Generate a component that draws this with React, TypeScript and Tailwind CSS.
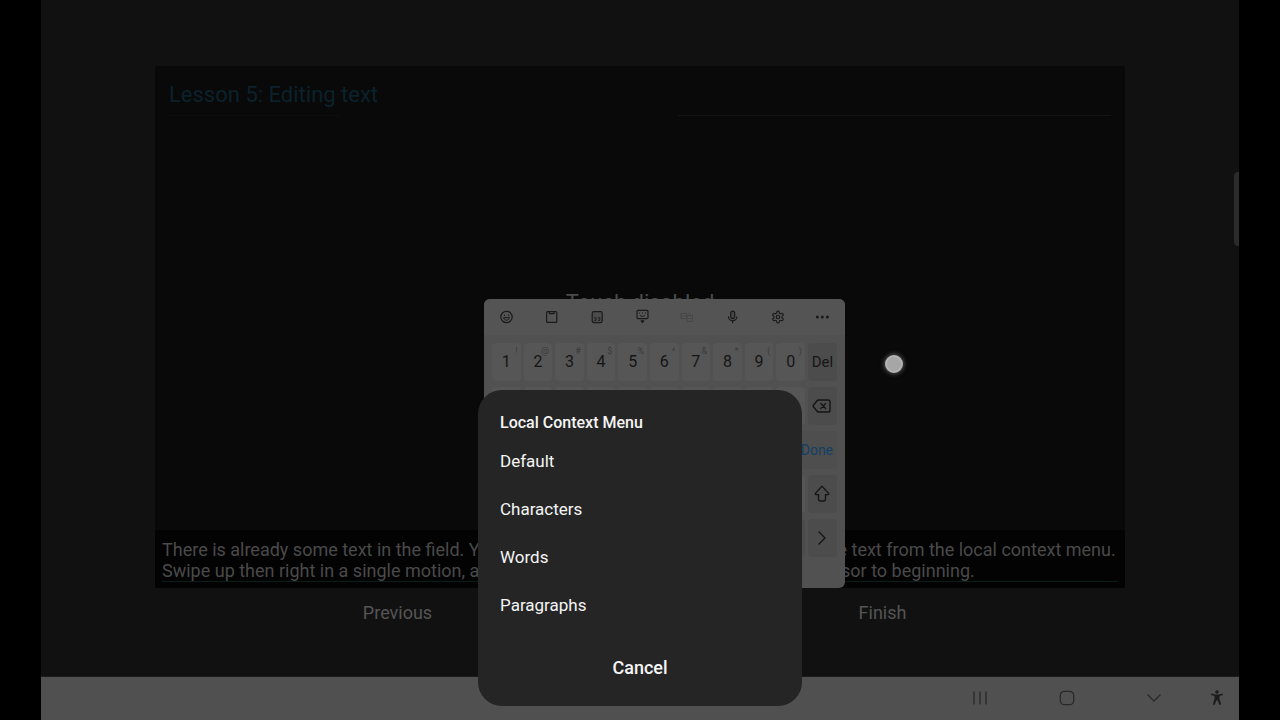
import React from 'react';
import { LuSettings } from 'react-icons/lu';

const numberRow = [
  { key: '1', alt: '!' },
  { key: '2', alt: '@' },
  { key: '3', alt: '#' },
  { key: '4', alt: '$' },
  { key: '5', alt: '%' },
  { key: '6', alt: '^' },
  { key: '7', alt: '&' },
  { key: '8', alt: '*' },
  { key: '9', alt: '(' },
  { key: '0', alt: ')' },
];

const menuItems = ['Default', 'Characters', 'Words', 'Paragraphs'];

const iconProps = {
  width: 16,
  height: 16,
  viewBox: '0 0 16 16',
  fill: 'none',
  stroke: 'currentColor',
  strokeWidth: 1.2,
  strokeLinecap: 'round' as const,
  strokeLinejoin: 'round' as const,
};

const SmileIcon = () => (
  <svg {...iconProps}>
    <circle cx="8.500" cy="8" r="5.700" />
    <path d="M5.700 9c.4 1.500 1.500 2.200 2.800 2.200s2.400-.7 2.800-2.200z" strokeWidth="1" />
    <path d="M6.500 6v.4M10.500 6v.4" />
  </svg>
);

const ClipboardIcon = () => (
  <svg {...iconProps}>
    <rect x="3.600" y="2.600" width="10.200" height="10.800" rx="1" />
    <path d="M6.400 2.800v1.900H11V2.800" />
  </svg>
);

const KeypadIcon = () => (
  <svg {...iconProps}>
    <rect x="3.200" y="2.600" width="10" height="11" rx="1.600" fill="currentColor" fillOpacity="0.120" />
    <path d="M5.600 8.800h1.400v2.600H5.600M9.400 8.800h1.400v2.600H9.400" strokeWidth="0.900" />
  </svg>
);

const KeyboardIcon = () => (
  <svg {...iconProps}>
    <rect x="3" y="1.300" width="11" height="8.400" rx="1.200" />
    <path d="M5.500 4h.2M8.500 4h.2M11.500 4h.2M6.300 6.700c1.200 1 3.200 1 4.400 0" strokeWidth="1" />
    <path d="M7.200 11.800h2.600L8.500 13.500z" fill="currentColor" />
  </svg>
);

const TranslateIcon = () => (
  <svg {...iconProps} className="text-[#474747]" strokeWidth="1">
    <path d="M2.500 4.500h5v5h-5zM8.500 6.500h5v6h-5zM4 7h2M10 9.500h2M9.500 4l1.500 1.500" />
  </svg>
);

const MicIcon = () => (
  <svg {...iconProps}>
    <rect x="6.700" y="2.200" width="4" height="7.400" rx="2" fill="currentColor" fillOpacity="0.250" />
    <path d="M4.500 7.800c0 2.300 1.900 3.900 4.200 3.900s4.200-1.600 4.200-3.900M8.700 11.700v2.100" />
  </svg>
);

const MoreIcon = () => (
  <svg {...iconProps} stroke="none" fill="currentColor">
    <circle cx="2.300" cy="8" r="1.500" />
    <circle cx="7.300" cy="8" r="1.500" />
    <circle cx="12.300" cy="8" r="1.500" />
  </svg>
);

const toolbar = [
  { label: 'Emoji', icon: <SmileIcon /> },
  { label: 'Clipboard', icon: <ClipboardIcon /> },
  { label: 'One-handed keypad', icon: <KeypadIcon /> },
  { label: 'Floating keyboard', icon: <KeyboardIcon /> },
  { label: 'Translate', icon: <TranslateIcon /> },
  { label: 'Voice input', icon: <MicIcon /> },
  { label: 'Settings', icon: <LuSettings size={14} /> },
  { label: 'More', icon: <MoreIcon /> },
];

const BackspaceIcon = () => (
  <svg width="20" height="16" viewBox="0 0 20 16" fill="none" stroke="currentColor" strokeWidth="1.400" strokeLinejoin="round" strokeLinecap="round">
    <path d="M6.500 2h9.700c1.100 0 1.800.7 1.800 1.800v8.400c0 1.100-.7 1.800-1.800 1.800H6.500c-.6 0-1-.2-1.400-.7L1.600 9c-.5-.6-.5-1.400 0-2l3.500-4.300c.4-.5.8-.7 1.400-.7z" />
    <path d="M8.800 5.600l4.800 4.800M13.600 5.600l-4.800 4.800" />
  </svg>
);

const ShiftIcon = () => (
  <svg width="16" height="18" viewBox="0 0 16 18" fill="none" stroke="currentColor" strokeWidth="1.400" strokeLinejoin="round">
    <path d="M7.300 1.900L1.500 8.400c-.5.600-.2 1.200.5 1.200h2.500v5c0 .9.500 1.400 1.400 1.400h4.200c.9 0 1.400-.5 1.400-1.400v-5H14c.7 0 1-.6.500-1.200L8.700 1.900c-.4-.5-1-.5-1.400 0z" />
  </svg>
);

const NextIcon = () => (
  <svg width="10" height="16" viewBox="0 0 10 16" fill="none" stroke="currentColor" strokeWidth="1.400" strokeLinecap="round" strokeLinejoin="round">
    <path d="M2 2l6 6-6 6" />
  </svg>
);

const Key = ({ label, alt, children }: { label: string; alt?: string; children?: React.ReactNode }) => (
  <button aria-label={label} className="relative flex-1 basis-0 h-[38px] flex items-center justify-center rounded-sm bg-[#565656] text-base text-[#151515]">
    {children}
    {alt && <span className="absolute top-0 right-[3px] text-[9px] leading-4 text-[#3a3a3a]">{alt}</span>}
  </button>
);

const SideKey = ({ label, children }: { label: string; children?: React.ReactNode }) => (
  <button aria-label={label} className="w-[29px] h-[38px] flex items-center justify-center rounded-sm bg-[#4c4c4c] text-[15px] text-[#151515]">
    {children}
  </button>
);

const LetterRow = ({ letters, children }: { letters: string; children: React.ReactNode }) => (
  <div className="flex gap-[3px]">
    {letters.split('').map(letter => (
      <Key key={letter} label={letter} />
    ))}
    {children}
  </div>
);

const Keyboard = () => (
  <div className="absolute left-[329px] bottom-0 w-[361px] h-[289px] rounded-md bg-[#515151] overflow-hidden">
    <div className="h-9 px-[14px] flex items-center justify-between bg-[#545454] text-[#1a1a1a]">
      {toolbar.map(item => (
        <button key={item.label} aria-label={item.label} className="w-4 h-4 flex items-center justify-center">
          {item.icon}
        </button>
      ))}
    </div>
    <div className="flex flex-col gap-[6px] px-2 pt-2">
      <div className="flex gap-[3px]">
        {numberRow.map(item => (
          <Key key={item.key} label={item.key} alt={item.alt}>{item.key}</Key>
        ))}
        <SideKey label="Delete">Del</SideKey>
      </div>
      <LetterRow letters="qwertyuiop">
        <SideKey label="Backspace"><BackspaceIcon /></SideKey>
      </LetterRow>
      <LetterRow letters="asdfghjkl">
        <button className="w-[60px] h-[38px] pr-1 flex items-center justify-end rounded-sm bg-[#4e4e4e] text-sm text-[#123f66]">Done</button>
      </LetterRow>
      <LetterRow letters="zxcvbnm,.?">
        <SideKey label="Shift"><ShiftIcon /></SideKey>
      </LetterRow>
      <div className="flex gap-[3px]">
        <Key label="Control" />
        <Key label="Symbols" />
        <button aria-label="Space" className="flex-4 basis-0 h-[38px] rounded-sm bg-[#565656]"></button>
        <SideKey label="Previous character" />
        <SideKey label="Next character"><NextIcon /></SideKey>
      </div>
    </div>
  </div>
);

const ContextMenu = () => (
  <div role="dialog" aria-labelledby="menu-title" className="absolute bottom-[14px] left-1/2 -translate-x-1/2 w-[324px] rounded-3xl bg-[#252525] text-[#f5f5f5] pt-5 pb-4">
    <h2 id="menu-title" className="px-[22px] pb-[2px] text-base leading-[26px] font-medium">Local Context Menu</h2>
    <ul>
      {menuItems.map(item => (
        <li key={item}>
          <button className="w-full h-12 px-[22px] text-left text-[17px]">{item}</button>
        </li>
      ))}
    </ul>
    <div className="flex justify-center pt-4">
      <button className="h-11 px-6 text-lg font-medium">Cancel</button>
    </div>
  </div>
);

const NavigationBar = () => (
  <nav className="h-11 shrink-0 bg-[#505050] border-t border-[#1c1c1c] flex items-center justify-end gap-[69px] pr-[14px] pb-[2px] text-[#292929]">
    <button aria-label="Recent apps">
      <svg width="18" height="18" viewBox="0 0 18 18" fill="none" stroke="currentColor" strokeWidth="1.300">
        <path d="M3 2.500v13M9 2.500v13M15 2.500v13" />
      </svg>
    </button>
    <button aria-label="Home">
      <svg width="18" height="18" viewBox="0 0 18 18" fill="none" stroke="currentColor" strokeWidth="1.300">
        <rect x="2.300" y="2.300" width="13.400" height="13.400" rx="4.300" />
      </svg>
    </button>
    <div className="flex items-center gap-[46px]">
      <button aria-label="Hide keyboard">
        <svg width="18" height="18" viewBox="0 0 18 18" fill="none" stroke="currentColor" strokeWidth="1.300">
          <path d="M2.500 5.500L9 12l6.500-6.500" />
        </svg>
      </button>
      <button aria-label="Accessibility">
        <svg width="16" height="18" viewBox="0 0 16 18" fill="#1c1c1c">
          <circle cx="8" cy="3" r="1.800" />
          <path d="M2 5.900l.2-1.300 4 .8h3.600l4-.8.2 1.300-3.500 1v3.200l1.700 5.300-1.700.5-2-4.700h-1l-2 4.700-1.700-.5 1.700-5.300V6.900z" />
        </svg>
      </button>
    </div>
  </nav>
);

export default function App() {
  return (
    <div className="min-h-screen flex bg-black px-[41px] font-[Roboto,sans-serif]">
      <div className="relative flex-1 min-w-0 flex flex-col bg-[#111111]">
        <main className="flex-1 flex flex-col pt-[66px] px-[114px]">
          <section className="relative min-h-[522px] flex flex-col bg-[#090909]">
            <header className="px-[14px] pt-[13px]">
              <h1 className="text-[22px] leading-8 text-[#0b222c]">Lesson 5: Editing text</h1>
              <div className="mt-1 flex justify-between">
                <div className="w-[18%] h-px bg-[#0d0d0d]"></div>
                <div className="w-[46%] h-px bg-[#141414]"></div>
              </div>
            </header>
            <p className="flex-1 pt-[171px] text-center text-[22px] leading-8 text-[#4a4a4a]">Touch disabled</p>
            <div className="bg-[#030303] px-[7px] pt-[9px] pb-[6px]">
              <p className="border-b border-[#0c1c1a] text-lg leading-[21px] text-[#4a4a4a] whitespace-nowrap">
                There is already some text in the field. You can choose, copy, cut and then paste some text from the local context menu.
                <br />
                Swipe up then right in a single motion, and choose Cursor movements, then Move cursor to beginning.
              </p>
            </div>
            <Keyboard />
          </section>
          <div className="flex text-lg leading-6 text-[#555555] pt-[13px]">
            <div className="flex-1 flex justify-center"><button>Previous</button></div>
            <div className="flex-1 flex justify-center"><button>Finish</button></div>
          </div>
        </main>
        <NavigationBar />
        <div className="absolute right-0 top-[172px] w-[5px] h-[74px] rounded-l bg-[#2b2b2b]"></div>
        <div className="absolute left-[844px] top-[355px] w-[18px] h-[18px] rounded-full bg-[#a6a6a6] border-2 border-[#b4b4b4] shadow-[0_0_4px_1px_#555555]"></div>
        <ContextMenu />
      </div>
    </div>
  );
}
